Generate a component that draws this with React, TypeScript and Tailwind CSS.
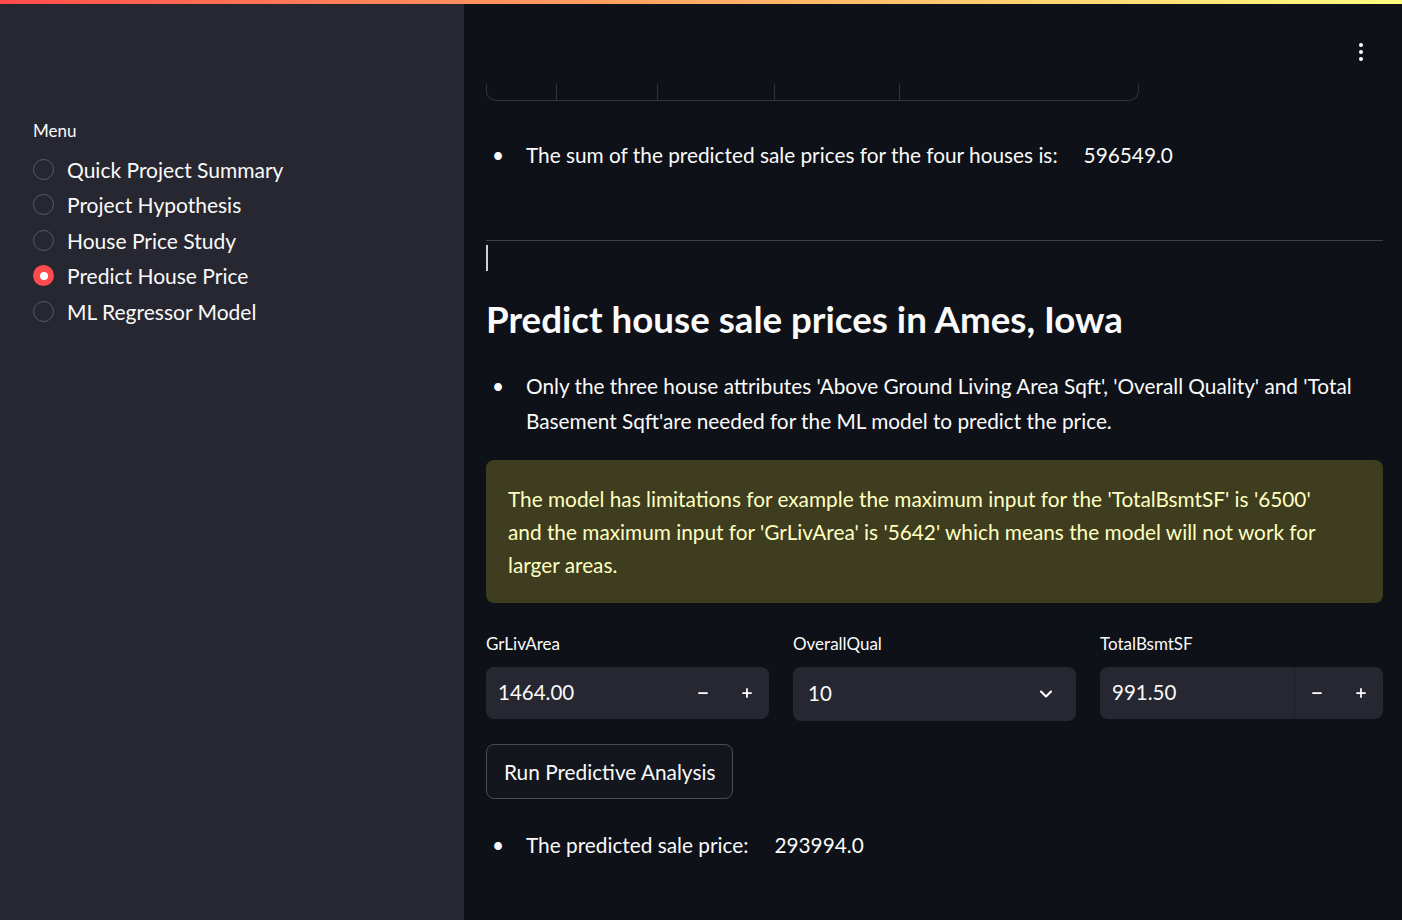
import { ChevronDown, Minus, Plus } from "lucide-react";

const menu = [
  "Quick Project Summary",
  "Project Hypothesis",
  "House Price Study",
  "Predict House Price",
  "ML Regressor Model",
];

const font = { fontFamily: "Lato, 'Noto Sans', sans-serif" };

const Sidebar = () => (
  <aside className="w-[464px] shrink-0 bg-[#262730] pt-[118px] pl-[33px]">
    <p className="text-[17px] text-[#fafafa] mb-[8px]">Menu</p>
    <ul className="flex flex-col">
      {menu.map((item) => {
        const active = item === "Predict House Price";
        return (
          <li key={item} className="flex items-center h-[35.5px] gap-[13px]">
            {active ? (
              <span className="w-[21px] h-[21px] rounded-full bg-[#ff4b4b] flex items-center justify-center">
                <span className="w-[8px] h-[8px] rounded-full bg-white" />
              </span>
            ) : (
              <span className="w-[21px] h-[21px] rounded-full border border-[#5a5c66]" />
            )}
            <span className="text-[21px] text-[#fafafa]">{item}</span>
          </li>
        );
      })}
    </ul>
  </aside>
);

const NumberInput = ({ value, divided }: { value: string; divided?: boolean }) => (
  <div className="h-[52px] rounded-[8px] bg-[#262730] flex items-center">
    <span className="flex-1 pl-[12px] text-[20.5px] text-[#fafafa]">{value}</span>
    <div className={`flex h-full ${divided ? "border-l border-[#1e1f26]" : ""}`}>
      <span className="w-[44px] flex items-center justify-center text-white">
        <Minus size={14} strokeWidth={3} />
      </span>
      <span className="w-[44px] flex items-center justify-center text-white">
        <Plus size={14} strokeWidth={3} />
      </span>
    </div>
  </div>
);

const Bullet = ({ children }: { children: React.ReactNode }) => (
  <div className="flex text-[20.8px] text-[#fafafa]">
    <span className="w-[40px] pl-[6px]">•</span>
    <div className="flex-1">{children}</div>
  </div>
);

export default function App() {
  return (
    <div className="relative w-[1402px] h-[920px] flex overflow-hidden bg-[#0e1117]" style={font}>
      <div className="absolute top-0 left-0 right-0 h-[4px] bg-gradient-to-r from-[#ff4b4b] to-[#fffd80]" />
      <Sidebar />
      <main className="relative flex-1 pl-[22px] pr-[19px]">
        <div className="absolute right-[39px] top-[43px] flex flex-col gap-[3px]">
          <span className="w-[4px] h-[4px] rounded-full bg-white" />
          <span className="w-[4px] h-[4px] rounded-full bg-white" />
          <span className="w-[4px] h-[4px] rounded-full bg-white" />
        </div>

        {/* bottom of a table scrolled off the top */}
        <div className="mt-[84px] w-[653px] h-[17px] flex border-b border-x border-[#31333f] rounded-b-[10px]">
          <div className="w-[70px] border-r border-[#31333f]" />
          <div className="w-[101px] border-r border-[#31333f]" />
          <div className="w-[117px] border-r border-[#31333f]" />
          <div className="w-[125px] border-r border-[#31333f]" />
        </div>

        <div className="mt-[38px]">
          <Bullet>
            The sum of the predicted sale prices for the four houses is:
            <span className="ml-[26px]">596549.0</span>
          </Bullet>
        </div>

        <hr className="mt-[70px] border-t border-[#3d3f47]" />
        <div className="mt-[4px] w-[2px] h-[26px] bg-[#d0d0d0]" />

        <h1 className="mt-[26px] text-[36.7px] font-bold text-[#fafafa] leading-[1.2]">
          Predict house sale prices in Ames, Iowa
        </h1>

        <div className="mt-[27px] leading-[35px]">
          <Bullet>
            Only the three house attributes 'Above Ground Living Area Sqft', 'Overall Quality' and 'Total
            Basement Sqft'are needed for the ML model to predict the price.
          </Bullet>
        </div>

        <div className="mt-[22px] rounded-[8px] bg-[#3e3d1f] pl-[22px] pr-[45px] py-[22px] text-[20.8px] leading-[33px] text-[#ffffc2]">
          The model has limitations for example the maximum input for the 'TotalBsmtSF' is '6500'
          and the maximum input for 'GrLivArea' is '5642' which means the model will not work for
          larger areas.
        </div>

        <div className="mt-[28px] grid grid-cols-3 gap-[24px]">
          <div>
            <p className="text-[17px] text-[#fafafa] mb-[10px]">GrLivArea</p>
            <NumberInput value="1464.00" />
          </div>
          <div>
            <p className="text-[17px] text-[#fafafa] mb-[10px]">OverallQual</p>
            <div className="h-[54px] rounded-[8px] bg-[#262730] flex items-center justify-between pl-[15px] pr-[20px]">
              <span className="text-[20.5px] text-[#fafafa]">10</span>
              <ChevronDown size={20} strokeWidth={2.5} className="text-white" />
            </div>
          </div>
          <div>
            <p className="text-[17px] text-[#fafafa] mb-[10px]">TotalBsmtSF</p>
            <NumberInput value="991.50" divided />
          </div>
        </div>

        <button className="mt-[23px] h-[55px] px-[17px] rounded-[8px] border border-[#4a4c55] bg-[#13161d] text-[20.8px] text-[#fafafa]">
          Run Predictive Analysis
        </button>

        <div className="mt-[30px]">
          <Bullet>
            The predicted sale price:
            <span className="ml-[26px]">293994.0</span>
          </Bullet>
        </div>
      </main>
    </div>
  );
}
